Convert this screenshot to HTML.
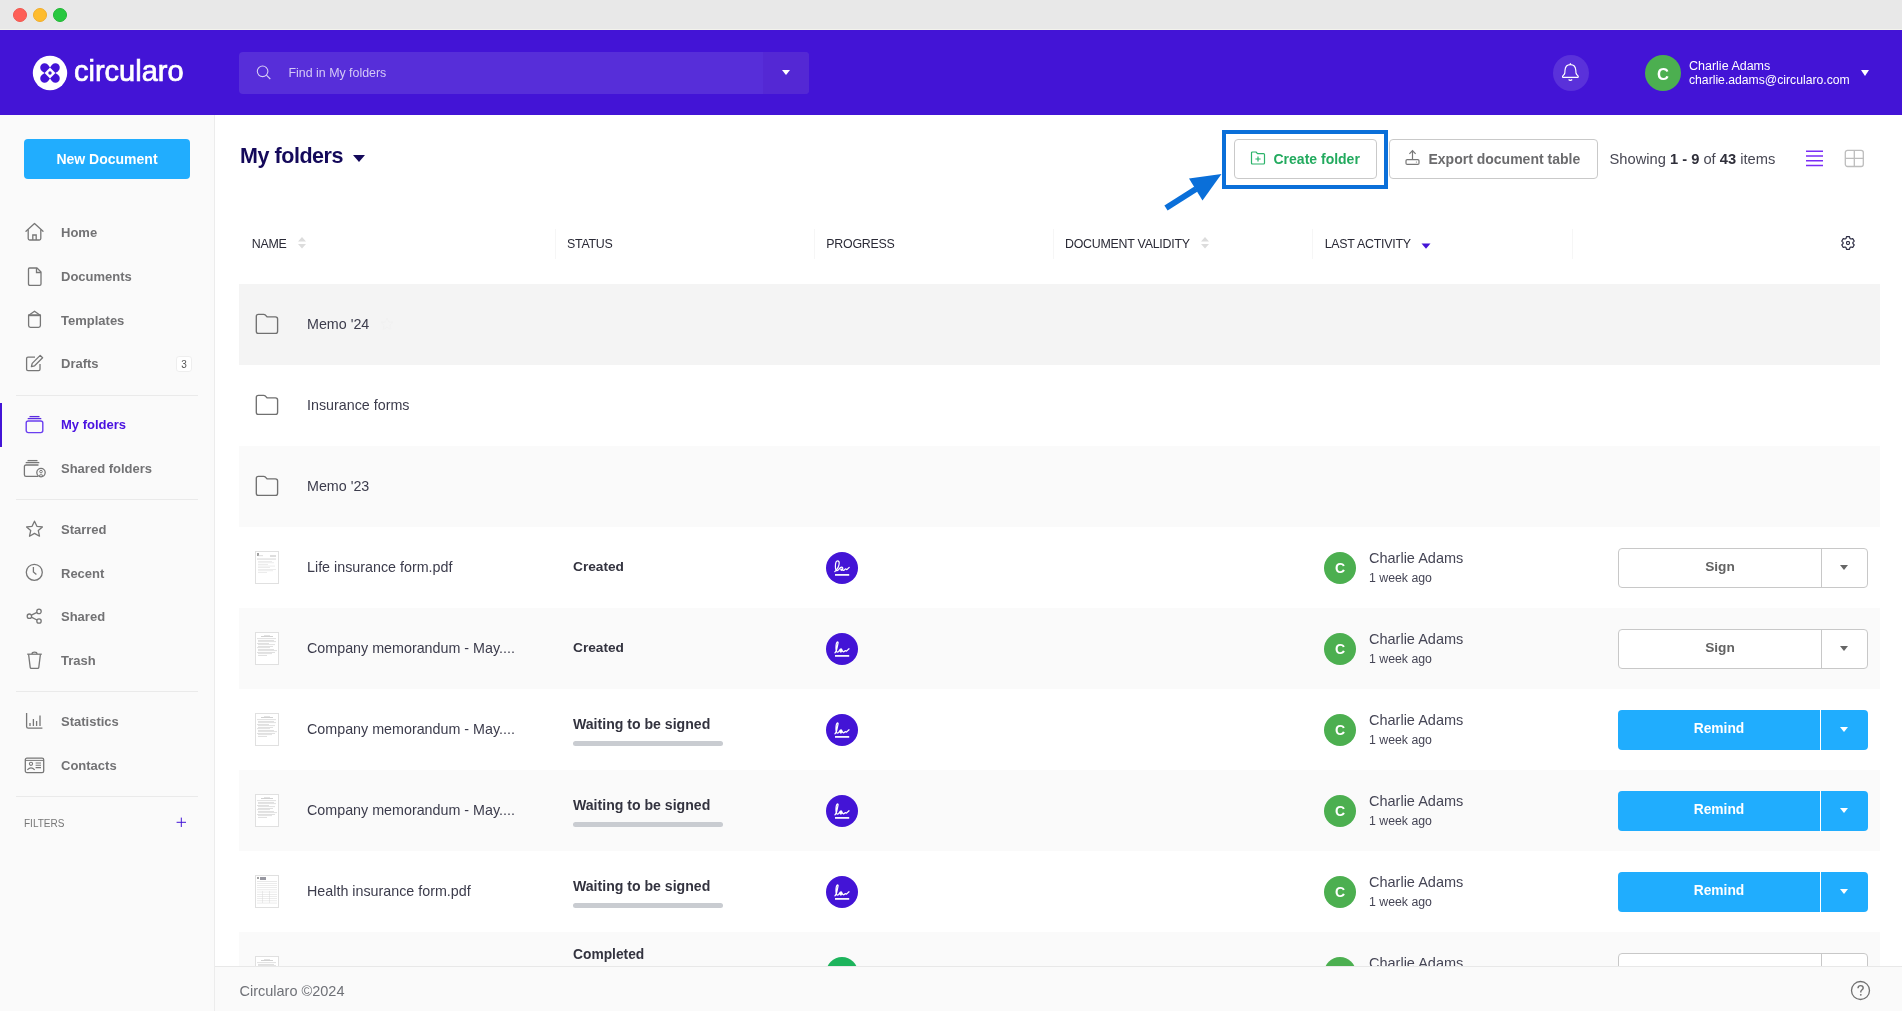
<!DOCTYPE html>
<html><head><meta charset="utf-8">
<style>
*{box-sizing:border-box;margin:0;padding:0}
html,body{width:1902px;height:1011px;overflow:hidden;background:#fff;font-family:"Liberation Sans",sans-serif}
.a{position:absolute}
.t{position:absolute;line-height:1;white-space:nowrap}
.b{font-weight:bold}
#titlebar{left:0;top:0;width:1902px;height:30px;background:#e8e8e8;border-bottom:1px solid #f3f3ec}
.dot{position:absolute;top:8px;width:14px;height:14px;border-radius:50%}
#header{left:0;top:30px;width:1902px;height:85px;background:#4314d6}
#sidebar{left:0;top:115px;width:215px;height:896px;background:#fafafa;border-right:1px solid #ececec}
.sep{position:absolute;left:16px;width:182px;height:1px;background:#eaeaea}
.nav{position:absolute;left:61px;font-size:13px;font-weight:bold;color:#727274;line-height:1;white-space:nowrap}
.ico{position:absolute}
#footer{left:215px;top:966px;width:1687px;height:45px;background:#fafafa;border-top:1px solid #e8e8e8}
.row{position:absolute;left:239px;width:1641px;height:81px}
.hd{position:absolute;top:237.5px;font-size:12.4px;letter-spacing:-0.25px;color:#2a2a36;line-height:1;white-space:nowrap}
.csep{position:absolute;top:229px;width:1px;height:30px;background:#f6f6f6}
.nm{position:absolute;left:68px;top:33px;font-size:14.3px;color:#3c3c4c;line-height:1;white-space:nowrap}
.st{position:absolute;left:334px;font-size:13.8px;font-weight:bold;color:#33333f;line-height:1;white-space:nowrap}
.pbar{position:absolute;left:334px;top:52px;width:150px;height:5px;border-radius:3px;background:#c9ccd1}
.sig{position:absolute;left:587px;top:25px;width:32px;height:32px;border-radius:50%;background:#4314d6}
.av{position:absolute;left:1085px;top:25px;width:32px;height:32px;border-radius:50%;background:#4caf50;color:#fff;font-weight:bold;font-size:14px;line-height:32px;text-align:center}
.un{position:absolute;left:1130px;top:24px;font-size:14.5px;color:#454555;line-height:1;white-space:nowrap}
.ago{position:absolute;left:1130px;top:44.6px;font-size:12.3px;color:#454555;line-height:1;white-space:nowrap}
.btn{position:absolute;left:1379px;top:21px;width:250px;height:40px;border-radius:4px}
.btn.w{background:#fff;border:1px solid #c8c8c8}
.btn.w .lbl{top:10.6px}
.btn.w .tri{top:16.3px;left:221px}
.btn.bl{background:#20adfe}
.btn .lbl{position:absolute;left:0;top:12.2px;width:202px;text-align:center;font-weight:bold;font-size:14px;line-height:1}
.btn .dv{position:absolute;left:202px;top:0;width:1px;height:100%}
.btn.w .dv{background:#c8c8c8}
.btn.bl .dv{background:#fff}
.btn .tri{position:absolute;left:222px;top:17px;width:0;height:0;border-left:4.5px solid transparent;border-right:4.5px solid transparent;border-top:5.5px solid #666}
.btn.bl .tri{border-top-color:#fff}
.thumb{position:absolute;left:16px;top:24px;width:24px;height:33px;background:#fff;border:1px solid #e2e2e2}
</style></head><body><div style="position:absolute;left:0;top:0;width:1902px;height:1011px;will-change:transform">

<!-- title bar -->
<div id="titlebar" class="a">
  <div class="dot" style="left:13px;background:#fe5f57;border:1px solid #f0564f"></div>
  <div class="dot" style="left:33px;background:#febc2e;border:1px solid #f1ad2a"></div>
  <div class="dot" style="left:53px;background:#28c840;border:1px solid #1fb634"></div>
</div>

<!-- header -->
<div id="header" class="a">
  <svg class="a" style="left:32px;top:25px" width="36" height="36" viewBox="-18 -18 36 36">
    <circle cx="0" cy="0" r="17.2" fill="#fff"/>
    <g fill="#4314d6"><path d="M0.00 -5.40 L-1.81 -7.95 A4.4 4.4 0 1 0 -7.95 -1.81 L-5.40 0.00 Z"/><path d="M0.00 -5.40 L1.81 -7.95 A4.4 4.4 0 1 1 7.95 -1.81 L5.40 0.00 Z"/><path d="M0.00 5.40 L-1.81 7.95 A4.4 4.4 0 1 1 -7.95 1.81 L-5.40 0.00 Z"/><path d="M0.00 5.40 L1.81 7.95 A4.4 4.4 0 1 0 7.95 1.81 L5.40 0.00 Z"/><circle cx="0" cy="0" r="1.7"/></g>
  </svg>
  <div class="t" style="left:74px;top:27px;font-size:29px;color:#fff;letter-spacing:0px;-webkit-text-stroke:0.7px #fff">circularo</div>

  <!-- search -->
  <div class="a" style="left:239px;top:22px;width:570px;height:42px;border-radius:4px;background:#572ed9;overflow:hidden">
    <div class="a" style="left:524px;top:0;width:46px;height:42px;background:#5428d4"></div>
    <svg class="a" style="left:16px;top:12px" width="18" height="18" viewBox="0 0 18 18">
      <circle cx="7.6" cy="7.3" r="5.3" fill="none" stroke="#d6cdf5" stroke-width="1.1"/>
      <path d="M11.4 11.1 L15.3 15" stroke="#d6cdf5" stroke-width="1.1"/>
    </svg>
    <div class="t" style="left:49.5px;top:14.6px;font-size:12.4px;color:#d4c9f6">Find in My folders</div>
    <div class="a" style="left:543px;top:18px;width:0;height:0;border-left:4.5px solid transparent;border-right:4.5px solid transparent;border-top:5.5px solid #fff"></div>
  </div>

  <!-- bell -->
  <div class="a" style="left:1553px;top:25px;width:36px;height:36px;border-radius:50%;background:#5a31da"></div>
  <svg class="a" style="left:1561px;top:32px" width="20" height="20" viewBox="0 0 20 20"><path d="M9.4 2.6 C5.8 2.6 4.2 4.8 4.0 8.4 L3.8 11.2 C3.6 12.6 2.2 13.4 1.6 14.2 Q1.3 15.4 2.4 15.4 L16.4 15.4 Q17.5 15.4 17.2 14.2 C16.6 13.4 15.2 12.6 15 11.2 L14.8 8.4 C14.6 4.8 13 2.6 9.4 2.6 Z" fill="none" stroke="#fff" stroke-width="1.15" stroke-linejoin="round"/><path d="M9.4 1.2 L9.4 2.6" stroke="#fff" stroke-width="1.3"/><path d="M7.6 17.5 Q9.4 19.3 11.2 17.5" fill="none" stroke="#fff" stroke-width="1.1"/></svg>

  <!-- user -->
  <div class="a" style="left:1645px;top:25px;width:36px;height:36px;border-radius:50%;background:#4caf50;color:#fff;font-weight:bold;font-size:16.5px;line-height:38px;text-align:center">C</div>
  <div class="t" style="left:1689px;top:30px;font-size:12.5px;color:#fff">Charlie Adams</div>
  <div class="t" style="left:1689px;top:44.2px;font-size:12.2px;color:#fff">charlie.adams@circularo.com</div>
  <div class="a" style="left:1861px;top:40px;width:0;height:0;border-left:4.5px solid transparent;border-right:4.5px solid transparent;border-top:6px solid #fff"></div>
</div>

<!-- sidebar -->
<div id="sidebar" class="a">
  <div class="a" style="left:24px;top:24px;width:166px;height:40px;border-radius:4px;background:#21adfe"></div>
  <div class="t b" style="left:24px;top:37.3px;width:166px;text-align:center;font-size:14px;color:#fff">New Document</div>
</div>


<!-- sidebar nav -->
<div class="nav" style="top:226.0px;color:#727274">Home</div>
<svg class="ico" style="left:24px;top:222px" width="21" height="20" viewBox="0 0 21 20"><path d="M2 9.2 L10.5 1.5 L19 9.2" fill="none" stroke="#777" stroke-width="1.3" stroke-linejoin="round" stroke-linecap="round"/><path d="M4.2 7.5 L4.2 16.5 Q4.2 18 5.7 18 L15.3 18 Q16.8 18 16.8 16.5 L16.8 7.5" fill="none" stroke="#777" stroke-width="1.3"/><path d="M8.8 18 L8.8 13 L12.2 13 L12.2 18" fill="none" stroke="#777" stroke-width="1.3"/></svg>
<div class="nav" style="top:269.7px;color:#727274">Documents</div>
<svg class="ico" style="left:27px;top:267px" width="16" height="20" viewBox="0 0 16 20"><path d="M2.5 1 L10 1 L14 5 L14 17 Q14 18.4 12.6 18.4 L2.9 18.4 Q1.5 18.4 1.5 17 L1.5 2 Q1.5 1 2.5 1 Z" fill="none" stroke="#777" stroke-width="1.3" stroke-linejoin="round"/><path d="M9.5 1 L9.5 5.5 L14 5.5" fill="none" stroke="#777" stroke-width="1.3"/></svg>
<div class="nav" style="top:313.9px;color:#727274">Templates</div>
<svg class="ico" style="left:27px;top:310px" width="16" height="19" viewBox="0 0 16 19"><path d="M2.2 5 L7.5 1.2 L12.8 5" fill="none" stroke="#777" stroke-width="1.3" stroke-linejoin="round"/><path d="M1.6 5 L1.6 15.6 Q1.6 17.4 3.4 17.4 L11.6 17.4 Q13.4 17.4 13.4 15.6 L13.4 5 Z" fill="none" stroke="#777" stroke-width="1.3" stroke-linejoin="round"/><path d="M1.6 5.6 L13.4 5.6" stroke="#777" stroke-width="1.2"/></svg>
<div class="nav" style="top:356.6px;color:#727274">Drafts</div>
<svg class="ico" style="left:25px;top:354px" width="19" height="18" viewBox="0 0 19 18"><path d="M10 3.2 L3 3.2 Q1.6 3.2 1.6 4.6 L1.6 15.2 Q1.6 16.6 3 16.6 L13.6 16.6 Q15 16.6 15 15.2 L15 10" fill="none" stroke="#777" stroke-width="1.3"/><path d="M15.2 1.4 L17.6 3.8 L9.6 11.8 L6.4 12.6 L7.2 9.4 Z" fill="none" stroke="#777" stroke-width="1.3" stroke-linejoin="round"/></svg>
<div class="nav" style="top:417.7px;color:#4a12e0">My folders</div>
<svg class="ico" style="left:25px;top:415px" width="19" height="19" viewBox="0 0 19 19"><path d="M4.5 1.6 L14.5 1.6" stroke="#5a2be0" stroke-width="1.3"/><path d="M2.7 3.6 L16.3 3.6" stroke="#5a2be0" stroke-width="1.3"/><rect x="1.2" y="6" width="16.6" height="11.6" rx="2" fill="none" stroke="#6a3ef0" stroke-width="1.4"/></svg>
<div class="nav" style="top:461.6px;color:#727274">Shared folders</div>
<svg class="ico" style="left:23px;top:459px" width="23" height="19" viewBox="0 0 23 19"><path d="M4.5 1.6 L14.5 1.6" stroke="#777" stroke-width="1.3"/><path d="M2.7 3.6 L16.3 3.6" stroke="#777" stroke-width="1.3"/><path d="M15.5 6 L3 6 Q1.4 6 1.4 7.6 L1.4 15.8 Q1.4 17.4 3 17.4 L15 17.4" fill="none" stroke="#777" stroke-width="1.3"/><circle cx="18" cy="13.6" r="4.2" fill="#fafafa" stroke="#777" stroke-width="1.3"/><circle cx="18" cy="12.6" r="1.3" fill="none" stroke="#777" stroke-width="1"/><path d="M15.8 16.6 Q18 14.6 20.2 16.6" fill="none" stroke="#777" stroke-width="1"/></svg>
<div class="nav" style="top:522.7px;color:#727274">Starred</div>
<svg class="ico" style="left:25px;top:520px" width="19" height="18" viewBox="0 0 19 18"><path d="M9.5 1.2 L11.9 6.3 L17.4 6.9 L13.3 10.6 L14.5 16.2 L9.5 13.4 L4.5 16.2 L5.7 10.6 L1.6 6.9 L7.1 6.3 Z" fill="none" stroke="#777" stroke-width="1.3" stroke-linejoin="round"/></svg>
<div class="nav" style="top:566.6px;color:#727274">Recent</div>
<svg class="ico" style="left:25px;top:563px" width="19" height="19" viewBox="0 0 19 19"><circle cx="9.3" cy="9.3" r="8" fill="none" stroke="#777" stroke-width="1.3"/><path d="M8.4 4 L8.4 9 L11.4 11.6" fill="none" stroke="#777" stroke-width="1.3"/></svg>
<div class="nav" style="top:610.0px;color:#727274">Shared</div>
<svg class="ico" style="left:26px;top:608px" width="17" height="17" viewBox="0 0 17 17"><circle cx="13" cy="3.4" r="2.2" fill="none" stroke="#777" stroke-width="1.3"/><circle cx="3.4" cy="8.2" r="2.2" fill="none" stroke="#777" stroke-width="1.3"/><circle cx="13" cy="13" r="2.2" fill="none" stroke="#777" stroke-width="1.3"/><path d="M5.3 7.2 L11 4.4 M5.3 9.2 L11 12" stroke="#777" stroke-width="1.3"/></svg>
<div class="nav" style="top:653.9px;color:#727274">Trash</div>
<svg class="ico" style="left:26px;top:651px" width="17" height="19" viewBox="0 0 17 19"><path d="M1.2 3.2 L15.8 3.2" stroke="#777" stroke-width="1.3"/><path d="M6 3 Q6 1.2 8.5 1.2 Q11 1.2 11 3" fill="none" stroke="#777" stroke-width="1.3"/><path d="M2.6 3.4 L4.2 16.4 Q4.3 17.4 5.3 17.4 L11.7 17.4 Q12.7 17.4 12.8 16.4 L14.4 3.4" fill="none" stroke="#777" stroke-width="1.3"/></svg>
<div class="nav" style="top:715.0px;color:#727274">Statistics</div>
<svg class="ico" style="left:25px;top:712px" width="19" height="18" viewBox="0 0 19 18"><path d="M1.6 1 L1.6 14.6 Q1.6 16.2 3.2 16.2 L17.4 16.2" fill="none" stroke="#777" stroke-width="1.3"/><path d="M5 11 L5 14 M8.4 7 L8.4 14 M11.6 9 L11.6 14 M15 3.5 L15 14" stroke="#777" stroke-width="1.3"/></svg>
<div class="nav" style="top:758.9px;color:#727274">Contacts</div>
<svg class="ico" style="left:24px;top:757px" width="21" height="17" viewBox="0 0 21 17"><rect x="1.3" y="1.2" width="18.4" height="14.4" rx="1.6" fill="none" stroke="#777" stroke-width="1.3"/><path d="M1.3 3.4 L19.7 3.4" stroke="#777" stroke-width="1"/><circle cx="7" cy="6.8" r="1.6" fill="none" stroke="#777" stroke-width="1.1"/><path d="M3.3 12.8 Q7 9 10.7 12.8" fill="none" stroke="#777" stroke-width="1.1"/><path d="M11.6 6 L17 6 M11.6 8.3 L17 8.3 M11.6 10.6 L17 10.6" stroke="#777" stroke-width="1.1"/></svg>
<div class="a" style="left:0;top:403px;width:2px;height:44px;background:#4314d6"></div>
<div class="sep" style="top:395px"></div>
<div class="sep" style="top:499px"></div>
<div class="sep" style="top:691px"></div>
<div class="sep" style="top:796px"></div>
<div class="a" style="left:176px;top:356px;width:16px;height:16px;border-radius:3px;background:#fff;border:1px solid #eee"></div>
<div class="t" style="left:176px;top:360px;width:16px;text-align:center;font-size:10px;color:#555">3</div>
<div class="t" style="left:24px;top:818.5px;font-size:10px;color:#777">FILTERS</div>
<svg class="a" style="left:175.5px;top:817px" width="11" height="11" viewBox="0 0 11 11"><path d="M5.3 0.6 L5.3 10 M0.6 5.3 L10 5.3" stroke="#4314d6" stroke-width="1"/></svg>


<!-- main top -->
<div class="t b" style="left:240px;top:145.6px;font-size:21.5px;letter-spacing:-0.45px;color:#14095a">My folders</div>
<div class="a" style="left:353px;top:155px;width:0;height:0;border-left:6px solid transparent;border-right:6px solid transparent;border-top:7px solid #14095a"></div>
<div class="a" style="left:1222px;top:130px;width:166px;height:59px;border:4.6px solid #0a6fd9"></div>
<div class="a" style="left:1234px;top:139px;width:143px;height:40px;border:1px solid #c9c9c9;border-radius:4px;background:#fff"></div>
<svg class="a" style="left:1250px;top:151px" width="16" height="14" viewBox="0 0 16 14"><path d="M1.5 2 Q1.5 1 2.5 1 L6 1 L7.5 2.6 L13.5 2.6 Q14.5 2.6 14.5 3.6 L14.5 12 Q14.5 13 13.5 13 L2.5 13 Q1.5 13 1.5 12 Z" fill="none" stroke="#2bb36a" stroke-width="1.2" stroke-linejoin="round"/><path d="M8 5.4 L8 10.6 M5.4 8 L10.6 8" stroke="#2bb36a" stroke-width="1.2"/></svg>
<div class="t b" style="left:1273.5px;top:152px;font-size:14px;color:#22aa5e">Create folder</div>
<svg class="a" style="left:1160px;top:168px" width="66" height="46" viewBox="0 0 66 46"><path d="M6 40 L36 21" stroke="#0a6fd9" stroke-width="6" stroke-linecap="butt"/><path d="M61.5 6 L29 10.5 L42.5 32.5 Z" fill="#0a6fd9"/></svg>
<div class="a" style="left:1389px;top:139px;width:209px;height:40px;border:1px solid #c9c9c9;border-radius:4px;background:#fff"></div>
<svg class="a" style="left:1404px;top:149px" width="18" height="17" viewBox="0 0 18 17"><path d="M8.5 11 L8.5 2 M5.4 4.8 L8.5 1.6 L11.6 4.8" fill="none" stroke="#777" stroke-width="1.2"/><rect x="2" y="10.6" width="13" height="4.8" rx="1.2" fill="none" stroke="#777" stroke-width="1.2"/><circle cx="12.4" cy="13" r="0.6" fill="#777"/></svg>
<div class="t b" style="left:1428.5px;top:152px;font-size:14px;color:#6b6b6d">Export document table</div>
<div class="t" style="left:1609.5px;top:152.3px;font-size:14.7px;color:#474753">Showing <b style="color:#2f2f3a">1 - 9</b> of <b style="color:#2f2f3a">43</b> items</div>
<svg class="a" style="left:1805px;top:150px" width="19" height="17" viewBox="0 0 19 17"><path d="M1 1.3 L18 1.3 M1 6 L18 6 M1 10.7 L18 10.7 M1 15.4 L18 15.4" stroke="#7a2cf5" stroke-width="1.5"/></svg>
<svg class="a" style="left:1844px;top:149px" width="21" height="19" viewBox="0 0 21 19"><rect x="1.3" y="1.3" width="18" height="16.2" rx="2.2" fill="none" stroke="#bdbdbd" stroke-width="1.3"/><path d="M10.3 1.3 L10.3 17.5 M1.3 9.4 L19.3 9.4" stroke="#bdbdbd" stroke-width="1.3"/></svg>
<div class="hd" style="left:251.8px">NAME</div>
<div class="hd" style="left:567px">STATUS</div>
<div class="hd" style="left:826.3px">PROGRESS</div>
<div class="hd" style="left:1065px">DOCUMENT VALIDITY</div>
<div class="hd" style="left:1324.7px">LAST ACTIVITY</div>
<div class="csep" style="left:555px"></div>
<div class="csep" style="left:814px"></div>
<div class="csep" style="left:1053px"></div>
<div class="csep" style="left:1312px"></div>
<div class="csep" style="left:1572px"></div>
<svg class="a" style="left:297px;top:236px" width="10" height="14" viewBox="0 0 10 14"><path d="M1 5.5 L5 1 L9 5.5 Z M1 8 L5 12.5 L9 8 Z" fill="#dcdcdc"/></svg>
<svg class="a" style="left:1199.5px;top:236px" width="10" height="14" viewBox="0 0 10 14"><path d="M1 5.5 L5 1 L9 5.5 Z M1 8 L5 12.5 L9 8 Z" fill="#dcdcdc"/></svg>
<svg class="a" style="left:1421px;top:243px" width="10" height="6" viewBox="0 0 10 6"><path d="M0.5 0.5 L9.5 0.5 L5 5.8 Z" fill="#4314d6"/></svg>
<svg class="a" style="left:1840px;top:235px" width="16" height="16" viewBox="0 0 16 16"><path d="M6.01 3.52 L6.54 1.67 L9.46 1.67 L9.99 3.52 L10.88 4.04 L12.75 3.57 L14.22 6.10 L12.87 7.49 L12.87 8.51 L14.22 9.90 L12.75 12.43 L10.88 11.96 L9.99 12.48 L9.46 14.33 L6.54 14.33 L6.01 12.48 L5.12 11.96 L3.25 12.43 L1.78 9.90 L3.13 8.51 L3.13 7.49 L1.78 6.10 L3.25 3.57 L5.12 4.04 Z" fill="none" stroke="#2a2a40" stroke-width="1.15" stroke-linejoin="round"/><rect x="6.6" y="6.5" width="2.8" height="3" rx="0.9" fill="none" stroke="#2a2a40" stroke-width="1.15"/></svg>


<!-- rows -->
<div class="row" style="top:284px;background:#f4f4f4"><svg class="a" style="left:16px;top:29px" width="24" height="22" viewBox="0 0 24 22"><path d="M1.3 3.4 Q1.3 1.3 3.4 1.3 L8.6 1.3 Q9.6 1.3 10.4 2.1 L12 3.8 L20.4 3.8 Q22.6 3.8 22.6 6 L22.6 18.2 Q22.6 20.4 20.4 20.4 L3.4 20.4 Q1.3 20.4 1.3 18.2 Z" fill="none" stroke="#707070" stroke-width="1.35" stroke-linejoin="round"/></svg><div class="nm">Memo '24</div><svg class="a" style="left:141px;top:33px" width="14" height="14" viewBox="0 0 14 14"><path d="M7 1 L8.8 4.9 L13 5.3 L9.9 8.1 L10.8 12.4 L7 10.2 L3.2 12.4 L4.1 8.1 L1 5.3 L5.2 4.9 Z" fill="none" stroke="#f0f0f0" stroke-width="0.9"/></svg></div>
<div class="row" style="top:365px;background:#fff"><svg class="a" style="left:16px;top:29px" width="24" height="22" viewBox="0 0 24 22"><path d="M1.3 3.4 Q1.3 1.3 3.4 1.3 L8.6 1.3 Q9.6 1.3 10.4 2.1 L12 3.8 L20.4 3.8 Q22.6 3.8 22.6 6 L22.6 18.2 Q22.6 20.4 20.4 20.4 L3.4 20.4 Q1.3 20.4 1.3 18.2 Z" fill="none" stroke="#707070" stroke-width="1.35" stroke-linejoin="round"/></svg><div class="nm">Insurance forms</div></div>
<div class="row" style="top:446px;background:#fafafa"><svg class="a" style="left:16px;top:29px" width="24" height="22" viewBox="0 0 24 22"><path d="M1.3 3.4 Q1.3 1.3 3.4 1.3 L8.6 1.3 Q9.6 1.3 10.4 2.1 L12 3.8 L20.4 3.8 Q22.6 3.8 22.6 6 L22.6 18.2 Q22.6 20.4 20.4 20.4 L3.4 20.4 Q1.3 20.4 1.3 18.2 Z" fill="none" stroke="#707070" stroke-width="1.35" stroke-linejoin="round"/></svg><div class="nm">Memo '23</div></div>
<div class="row" style="top:527px;background:#fff"><svg class="a" style="left:16px;top:24px" width="24" height="33" viewBox="0 0 24 33"><rect x="0.5" y="0.5" width="23" height="32" fill="#fff" stroke="#e0e0e0"/><g opacity="0.55"><rect x="2" y="2" width="2" height="3" fill="#555"/><rect x="3" y="4.5" width="5" height="0.6" fill="#999"/><rect x="15" y="4.5" width="6" height="1" fill="#888"/><rect x="2" y="7" width="19" height="0.5" fill="#bbb"/><rect x="2" y="8" width="19" height="0.5" fill="#aaa"/><rect x="3" y="10.0" width="14" height="0.5" fill="#bbb"/><rect x="3" y="11.6" width="16" height="0.5" fill="#bbb"/><rect x="3" y="13.2" width="10" height="0.5" fill="#bbb"/><rect x="3" y="14.8" width="17" height="0.5" fill="#bbb"/><rect x="3" y="16.4" width="12" height="0.5" fill="#bbb"/><rect x="3" y="18.0" width="18" height="0.5" fill="#bbb"/><rect x="3" y="19.6" width="15" height="0.5" fill="#bbb"/><rect x="3" y="21.2" width="9" height="0.5" fill="#bbb"/></g></svg><div class="nm">Life insurance form.pdf</div><div class="st" style="top:33.3px;font-size:13.7px">Created</div><div class="sig"><svg class="a" style="left:0;top:0" width="32" height="32" viewBox="0 0 32 32"><path d="M8.8 19.6 C10.5 18 13.2 14 13.2 11 C13.2 9.4 12.4 8.9 11.6 8.9 C10.2 8.9 9.4 11 9.4 14.5 C9.4 17 10 18.6 11.2 18.6 C12.6 18.6 13.6 15.2 15.4 15.2 C16.8 15.2 17.2 16.6 16.4 17.8 C15.8 18.6 14.6 18.4 14.8 17.2 C15.2 16.4 16.4 18.6 17.8 18.4 C18.8 18.2 19.2 16.4 19.8 16.8 C20.4 17.4 20.6 18.2 21.4 17.2 L23.2 15.4" fill="none" stroke="#fff" stroke-width="1.2" stroke-linecap="round" stroke-linejoin="round"/><path d="M9 22.9 L23.2 22.9" stroke="#fff" stroke-width="1.7"/></svg></div><div class="av">C</div><div class="un">Charlie Adams</div><div class="ago">1 week ago</div><div class="btn w"><div class="lbl" style="color:#636363;font-size:13.7px">Sign</div><div class="dv"></div><div class="tri"></div></div></div>
<div class="row" style="top:608px;background:#fafafa"><svg class="a" style="left:16px;top:24px" width="24" height="33" viewBox="0 0 24 33"><rect x="0.5" y="0.5" width="23" height="32" fill="#fff" stroke="#e0e0e0"/><g opacity="0.55"><rect x="9" y="3" width="6" height="0.6" fill="#aaa"/><rect x="6" y="4.3" width="12" height="0.7" fill="#888"/><rect x="2" y="6.5" width="19" height="0.55" fill="#999"/><rect x="3" y="8.0" width="16" height="0.55" fill="#999"/><rect x="3" y="9.5" width="18" height="0.55" fill="#999"/><rect x="2" y="11.0" width="12" height="0.55" fill="#999"/><rect x="3" y="12.5" width="17" height="0.55" fill="#999"/><rect x="3" y="14.0" width="15" height="0.55" fill="#999"/><rect x="2" y="15.5" width="13" height="0.55" fill="#999"/><rect x="3" y="17.0" width="16" height="0.55" fill="#999"/><rect x="3" y="18.5" width="19" height="0.55" fill="#999"/><rect x="2" y="20.0" width="18" height="0.55" fill="#999"/><rect x="3" y="21.5" width="14" height="0.55" fill="#999"/><rect x="3" y="23.0" width="9" height="0.55" fill="#999"/></g></svg><div class="nm">Company memorandum - May....</div><div class="st" style="top:33.3px;font-size:13.7px">Created</div><div class="sig"><svg class="a" style="left:0;top:0" width="32" height="32" viewBox="0 0 32 32"><path d="M9 19.8 C10 19 10.6 17 11.2 14 C11.8 11 12.6 9 11.6 9 C10.4 9 10 12 10 15 C10 18 10.6 19.2 11.8 19.2 C13 19.2 13.6 16 15 16 C16.4 16 16.2 19 14.8 19 C13.8 19 14.2 16.6 15.8 17.4 C16.8 18 17.2 19.4 18.2 18.6 C19 18 19.4 17.2 19.8 17.8 C20.4 18.6 21.5 17 23 15.8" fill="none" stroke="#fff" stroke-width="1.3" stroke-linecap="round" stroke-linejoin="round"/><path d="M9 22.9 L23.2 22.9" stroke="#fff" stroke-width="1.7"/></svg></div><div class="av">C</div><div class="un">Charlie Adams</div><div class="ago">1 week ago</div><div class="btn w"><div class="lbl" style="color:#636363;font-size:13.7px">Sign</div><div class="dv"></div><div class="tri"></div></div></div>
<div class="row" style="top:689px;background:#fff"><svg class="a" style="left:16px;top:24px" width="24" height="33" viewBox="0 0 24 33"><rect x="0.5" y="0.5" width="23" height="32" fill="#fff" stroke="#e0e0e0"/><g opacity="0.55"><rect x="9" y="3" width="6" height="0.6" fill="#aaa"/><rect x="6" y="4.3" width="12" height="0.7" fill="#888"/><rect x="2" y="6.5" width="19" height="0.55" fill="#999"/><rect x="3" y="8.0" width="16" height="0.55" fill="#999"/><rect x="3" y="9.5" width="18" height="0.55" fill="#999"/><rect x="2" y="11.0" width="12" height="0.55" fill="#999"/><rect x="3" y="12.5" width="17" height="0.55" fill="#999"/><rect x="3" y="14.0" width="15" height="0.55" fill="#999"/><rect x="2" y="15.5" width="13" height="0.55" fill="#999"/><rect x="3" y="17.0" width="16" height="0.55" fill="#999"/><rect x="3" y="18.5" width="19" height="0.55" fill="#999"/><rect x="2" y="20.0" width="18" height="0.55" fill="#999"/><rect x="3" y="21.5" width="14" height="0.55" fill="#999"/><rect x="3" y="23.0" width="9" height="0.55" fill="#999"/></g></svg><div class="nm">Company memorandum - May....</div><div class="st" style="top:28px;font-size:14.1px">Waiting to be signed</div><div class="pbar"></div><div class="sig"><svg class="a" style="left:0;top:0" width="32" height="32" viewBox="0 0 32 32"><path d="M9 19.8 C10 19 10.6 17 11.2 14 C11.8 11 12.6 9 11.6 9 C10.4 9 10 12 10 15 C10 18 10.6 19.2 11.8 19.2 C13 19.2 13.6 16 15 16 C16.4 16 16.2 19 14.8 19 C13.8 19 14.2 16.6 15.8 17.4 C16.8 18 17.2 19.4 18.2 18.6 C19 18 19.4 17.2 19.8 17.8 C20.4 18.6 21.5 17 23 15.8" fill="none" stroke="#fff" stroke-width="1.3" stroke-linecap="round" stroke-linejoin="round"/><path d="M9 22.9 L23.2 22.9" stroke="#fff" stroke-width="1.7"/></svg></div><div class="av">C</div><div class="un">Charlie Adams</div><div class="ago">1 week ago</div><div class="btn bl"><div class="lbl" style="color:#fff;font-size:13.8px">Remind</div><div class="dv"></div><div class="tri"></div></div></div>
<div class="row" style="top:770px;background:#fafafa"><svg class="a" style="left:16px;top:24px" width="24" height="33" viewBox="0 0 24 33"><rect x="0.5" y="0.5" width="23" height="32" fill="#fff" stroke="#e0e0e0"/><g opacity="0.55"><rect x="9" y="3" width="6" height="0.6" fill="#aaa"/><rect x="6" y="4.3" width="12" height="0.7" fill="#888"/><rect x="2" y="6.5" width="19" height="0.55" fill="#999"/><rect x="3" y="8.0" width="16" height="0.55" fill="#999"/><rect x="3" y="9.5" width="18" height="0.55" fill="#999"/><rect x="2" y="11.0" width="12" height="0.55" fill="#999"/><rect x="3" y="12.5" width="17" height="0.55" fill="#999"/><rect x="3" y="14.0" width="15" height="0.55" fill="#999"/><rect x="2" y="15.5" width="13" height="0.55" fill="#999"/><rect x="3" y="17.0" width="16" height="0.55" fill="#999"/><rect x="3" y="18.5" width="19" height="0.55" fill="#999"/><rect x="2" y="20.0" width="18" height="0.55" fill="#999"/><rect x="3" y="21.5" width="14" height="0.55" fill="#999"/><rect x="3" y="23.0" width="9" height="0.55" fill="#999"/></g></svg><div class="nm">Company memorandum - May....</div><div class="st" style="top:28px;font-size:14.1px">Waiting to be signed</div><div class="pbar"></div><div class="sig"><svg class="a" style="left:0;top:0" width="32" height="32" viewBox="0 0 32 32"><path d="M9 19.8 C10 19 10.6 17 11.2 14 C11.8 11 12.6 9 11.6 9 C10.4 9 10 12 10 15 C10 18 10.6 19.2 11.8 19.2 C13 19.2 13.6 16 15 16 C16.4 16 16.2 19 14.8 19 C13.8 19 14.2 16.6 15.8 17.4 C16.8 18 17.2 19.4 18.2 18.6 C19 18 19.4 17.2 19.8 17.8 C20.4 18.6 21.5 17 23 15.8" fill="none" stroke="#fff" stroke-width="1.3" stroke-linecap="round" stroke-linejoin="round"/><path d="M9 22.9 L23.2 22.9" stroke="#fff" stroke-width="1.7"/></svg></div><div class="av">C</div><div class="un">Charlie Adams</div><div class="ago">1 week ago</div><div class="btn bl"><div class="lbl" style="color:#fff;font-size:13.8px">Remind</div><div class="dv"></div><div class="tri"></div></div></div>
<div class="row" style="top:851px;background:#fff"><svg class="a" style="left:16px;top:24px" width="24" height="33" viewBox="0 0 24 33"><rect x="0.5" y="0.5" width="23" height="32" fill="#fff" stroke="#e0e0e0"/><g opacity="0.55"><rect x="2" y="2" width="2" height="2" fill="#555"/><rect x="5" y="2" width="6" height="3" fill="#445"/><rect x="2" y="6" width="20" height="0.5" fill="#aaa"/><rect x="2" y="8.0" width="20" height="0.5" fill="#bbb"/><rect x="2" y="10.2" width="20" height="0.5" fill="#bbb"/><rect x="2" y="12.4" width="20" height="0.5" fill="#bbb"/><rect x="2" y="14.6" width="20" height="0.5" fill="#bbb"/><rect x="2" y="16.8" width="20" height="0.5" fill="#bbb"/><rect x="2" y="19.0" width="20" height="0.5" fill="#bbb"/><rect x="2" y="21.2" width="20" height="0.5" fill="#bbb"/><rect x="2" y="23.4" width="20" height="0.5" fill="#bbb"/><rect x="2" y="25.6" width="20" height="0.5" fill="#bbb"/><rect x="2" y="27.8" width="20" height="0.5" fill="#bbb"/><rect x="7" y="16" width="0.5" height="12" fill="#bbb"/><rect x="14" y="16" width="0.5" height="12" fill="#bbb"/></g></svg><div class="nm">Health insurance form.pdf</div><div class="st" style="top:28px;font-size:14.1px">Waiting to be signed</div><div class="pbar"></div><div class="sig"><svg class="a" style="left:0;top:0" width="32" height="32" viewBox="0 0 32 32"><path d="M9 19.8 C10 19 10.6 17 11.2 14 C11.8 11 12.6 9 11.6 9 C10.4 9 10 12 10 15 C10 18 10.6 19.2 11.8 19.2 C13 19.2 13.6 16 15 16 C16.4 16 16.2 19 14.8 19 C13.8 19 14.2 16.6 15.8 17.4 C16.8 18 17.2 19.4 18.2 18.6 C19 18 19.4 17.2 19.8 17.8 C20.4 18.6 21.5 17 23 15.8" fill="none" stroke="#fff" stroke-width="1.3" stroke-linecap="round" stroke-linejoin="round"/><path d="M9 22.9 L23.2 22.9" stroke="#fff" stroke-width="1.7"/></svg></div><div class="av">C</div><div class="un">Charlie Adams</div><div class="ago">1 week ago</div><div class="btn bl"><div class="lbl" style="color:#fff;font-size:13.8px">Remind</div><div class="dv"></div><div class="tri"></div></div></div>
<div class="row" style="top:932px;background:#fafafa"><svg class="a" style="left:16px;top:24px" width="24" height="33" viewBox="0 0 24 33"><rect x="0.5" y="0.5" width="23" height="32" fill="#fff" stroke="#e0e0e0"/><g opacity="0.55"><rect x="9" y="3" width="6" height="0.6" fill="#aaa"/><rect x="6" y="4.3" width="12" height="0.7" fill="#888"/><rect x="2" y="6.5" width="19" height="0.55" fill="#999"/><rect x="3" y="8.0" width="16" height="0.55" fill="#999"/><rect x="3" y="9.5" width="18" height="0.55" fill="#999"/><rect x="2" y="11.0" width="12" height="0.55" fill="#999"/><rect x="3" y="12.5" width="17" height="0.55" fill="#999"/><rect x="3" y="14.0" width="15" height="0.55" fill="#999"/><rect x="2" y="15.5" width="13" height="0.55" fill="#999"/><rect x="3" y="17.0" width="16" height="0.55" fill="#999"/><rect x="3" y="18.5" width="19" height="0.55" fill="#999"/><rect x="2" y="20.0" width="18" height="0.55" fill="#999"/><rect x="3" y="21.5" width="14" height="0.55" fill="#999"/><rect x="3" y="23.0" width="9" height="0.55" fill="#999"/></g></svg><div class="nm">Company memorandum - May....</div><div class="st" style="top:16.2px">Completed</div><div class="sig" style="background:#1db45c"></div><div class="av">C</div><div class="un">Charlie Adams</div><div class="ago">1 week ago</div><div class="btn w"><div class="lbl" style="color:#636363;font-size:13.7px">Sign</div><div class="dv"></div><div class="tri"></div></div></div>

<!-- footer -->
<div id="footer" class="a">
  <div class="t" style="left:24.5px;top:16.6px;font-size:14.5px;color:#6f7177">Circularo ©2024</div>
  <svg class="a" style="left:1635px;top:13px" width="22" height="22" viewBox="0 0 22 22">
    <circle cx="10.5" cy="10.5" r="9" fill="none" stroke="#707070" stroke-width="1.3"/>
    <path d="M8 8.3 C8 6.5 9.2 5.6 10.6 5.6 C12.1 5.6 13.2 6.6 13.2 7.9 C13.2 9.6 10.8 9.8 10.8 11.8 L10.8 12.4" fill="none" stroke="#707070" stroke-width="1.4"/>
    <circle cx="10.8" cy="14.8" r="0.9" fill="#707070"/>
  </svg>
</div>

</div></body></html>
